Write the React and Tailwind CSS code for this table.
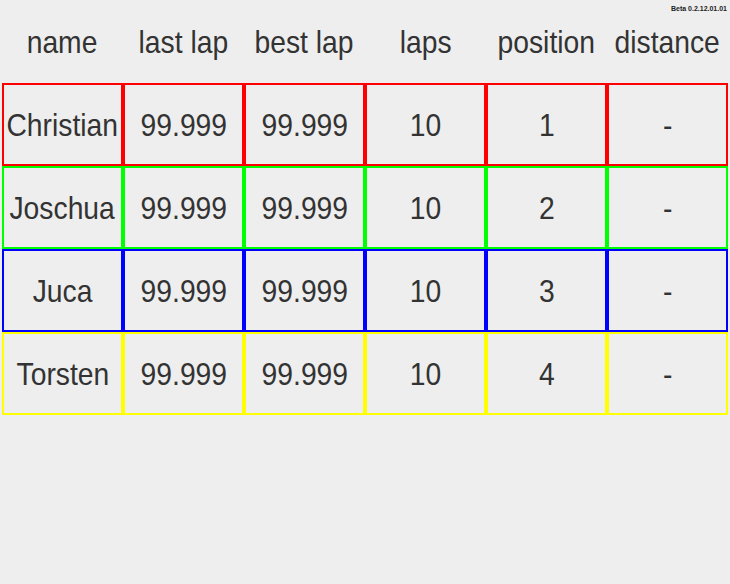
const headers = ['name', 'last lap', 'best lap', 'laps', 'position', 'distance'];

const drivers = [
    { name: 'Christian', lastLap: '99.999', bestLap: '99.999', laps: 10, position: 1, distance: '-', border: 'border-[#ff0000]' },
    { name: 'Joschua', lastLap: '99.999', bestLap: '99.999', laps: 10, position: 2, distance: '-', border: 'border-[#00ff00]' },
    { name: 'Juca', lastLap: '99.999', bestLap: '99.999', laps: 10, position: 3, distance: '-', border: 'border-[#0000ff]' },
    { name: 'Torsten', lastLap: '99.999', bestLap: '99.999', laps: 10, position: 4, distance: '-', border: 'border-[#ffff00]' },
];

function Cell({ children, border }) {
    return (
        <div className={`h-[83px] border-2 ${border} flex items-center justify-center pt-[3px]`}>
            <span className="scale-y-110 scale-x-[1.01]">{children}</span>
        </div>
    );
}

export default function App() {
    return (
        <div
            className="relative w-[730px] h-[584px] bg-[#eeeeee] text-[#333333] overflow-hidden"
            style={{ fontFamily: '"Liberation Sans", Arial, sans-serif' }}
        >
            {/* version label */}
            <div className="absolute top-[5px] right-[3px] text-[7px] font-bold leading-none text-[#222222]">
                Beta 0.2.12.01.01
            </div>

            {/* header */}
            <div className="grid grid-cols-6 px-[2px] h-[83px]">
                {headers.map(h => (
                    <div key={h} className="flex items-center justify-center text-[28px] whitespace-nowrap pt-[3px]">
                        <span className="scale-y-110 scale-x-[1.01]">{h}</span>
                    </div>
                ))}
            </div>

            {/* rows */}
            <div className="px-[2px]">
                {drivers.map(d => (
                    <div key={d.name} className="grid grid-cols-6 text-[28px]">
                        <Cell border={d.border}>{d.name}</Cell>
                        <Cell border={d.border}>{d.lastLap}</Cell>
                        <Cell border={d.border}>{d.bestLap}</Cell>
                        <Cell border={d.border}>{d.laps}</Cell>
                        <Cell border={d.border}>{d.position}</Cell>
                        <Cell border={d.border}>{d.distance}</Cell>
                    </div>
                ))}
            </div>
        </div>
    );
}
